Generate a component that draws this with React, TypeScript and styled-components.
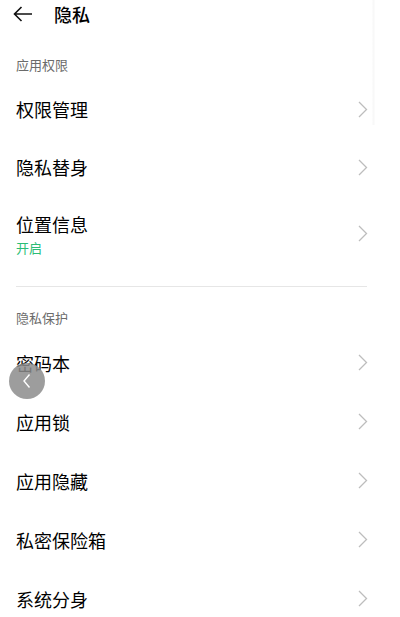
import styled, { createGlobalStyle } from "styled-components"

const GlobalStyle = createGlobalStyle`
    html, body {
        margin: 0;
        padding: 0;
        background: #ffffff;
    }
    body {
        font-family: "Noto Sans CJK SC", "Noto Sans", sans-serif;
        color: #000000;
    }
`

const Page = styled.div`
    position: relative;
    width: 400px;
    height: 617px;
    overflow: hidden;
    background: #ffffff;
`

const Header = styled.div`
    display: flex;
    align-items: center;
    height: 28px;
    padding-left: 13px;
    gap: 21px;
`

const Title = styled.h1`
    margin: 0;
    font-size: 18px;
    font-weight: 500;
    line-height: 28px;
`

const SectionLabel = styled.div<{ $top: number }>`
    margin-top: ${(p) => p.$top}px;
    height: 30px;
    line-height: 30px;
    padding-left: 16px;
    font-size: 13px;
    color: #6b6b6b;
`

const Row = styled.div<{ $height: number }>`
    display: flex;
    align-items: center;
    justify-content: space-between;
    height: ${(p) => p.$height}px;
    padding: 0 32px 0 16px;
`

const RowText = styled.div`
    display: flex;
    flex-direction: column;
`

const RowTitle = styled.span`
    font-size: 18px;
    line-height: 26px;
    color: #000000;
`

const RowSub = styled.span`
    font-size: 13px;
    line-height: 18px;
    margin-top: 2px;
    color: #2bbd76;
`

const Divider = styled.div`
    height: 1px;
    margin: 15px 33px 16px 16px;
    background: #e6e6e6;
`

const FloatBack = styled.div`
    position: absolute;
    left: 9px;
    top: 363px;
    width: 36px;
    height: 36px;
    border-radius: 50%;
    background: rgba(140, 140, 140, 0.85);
    display: flex;
    align-items: center;
    justify-content: center;
`

const EdgeShade = styled.div`
    position: absolute;
    left: 372px;
    top: 0;
    width: 3px;
    height: 125px;
    background: linear-gradient(to right, #fdfdfd, #f8f8f8, #fdfdfd);
`

const BackArrow = () => (
    <svg width="20" height="16" viewBox="0 0 20 16" fill="none">
        <path d="M19 8H1.5M8.5 1L1.5 8l7 7" stroke="#111" strokeWidth="1.6" />
    </svg>
)

const Chevron = () => (
    <svg width="10" height="17" viewBox="0 0 10 17" fill="none">
        <path d="M1 1l7.5 7.5L1 16" stroke="#bdbdbd" strokeWidth="1.3" />
    </svg>
)

const SmallChevron = () => (
    <svg width="10" height="16" viewBox="0 0 10 16" fill="none">
        <path d="M7.5 1.5L2 8l5.5 6.5" stroke="#ffffff" strokeWidth="1.4" />
    </svg>
)

const permissionItems = ["权限管理", "隐私替身"]
const protectItems = ["密码本", "应用锁", "应用隐藏", "私密保险箱", "系统分身"]

export default function App() {
    return (
        <Page>
            <GlobalStyle />
            <Header>
                <BackArrow />
                <Title>隐私</Title>
            </Header>

            <SectionLabel $top={22}>应用权限</SectionLabel>
            {permissionItems.map((name) => (
                <Row key={name} $height={58}>
                    <RowTitle>{name}</RowTitle>
                    <Chevron />
                </Row>
            ))}
            <Row $height={75}>
                <RowText>
                    <RowTitle>位置信息</RowTitle>
                    <RowSub>开启</RowSub>
                </RowText>
                <Chevron />
            </Row>

            <Divider />

            <SectionLabel $top={0}>隐私保护</SectionLabel>
            {protectItems.map((name) => (
                <Row key={name} $height={59}>
                    <RowTitle>{name}</RowTitle>
                    <Chevron />
                </Row>
            ))}

            <EdgeShade />
            <FloatBack>
                <SmallChevron />
            </FloatBack>
        </Page>
    )
}
